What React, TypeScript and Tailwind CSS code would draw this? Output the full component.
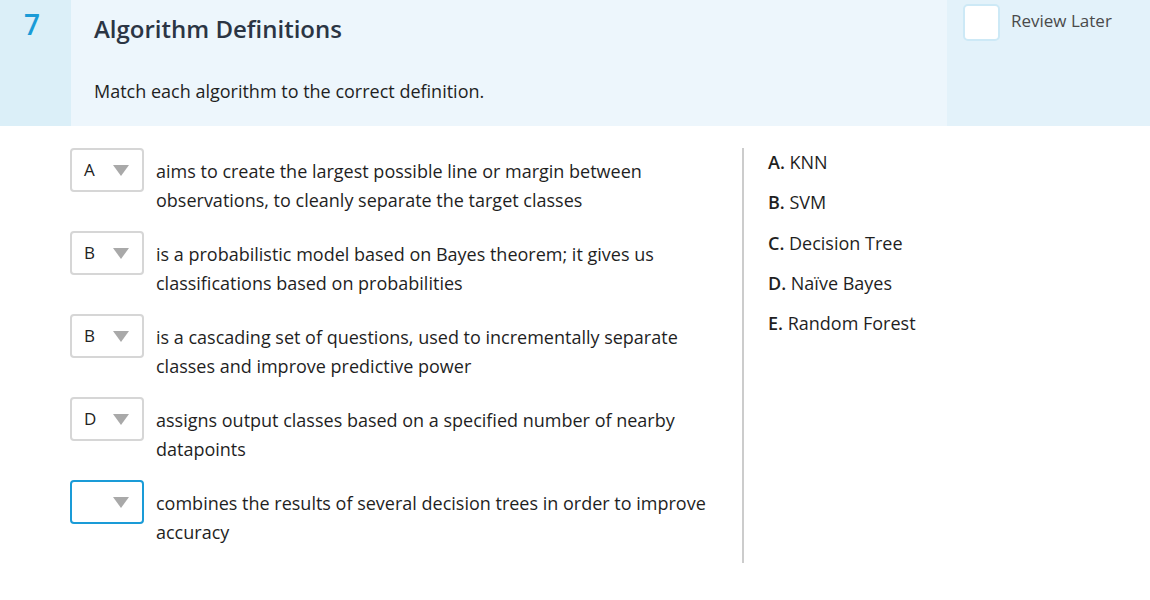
type Row = { value: string; text: string; focused?: boolean };

const rows: Row[] = [
  {
    value: "A",
    text: "aims to create the largest possible line or margin between observations, to cleanly separate the target classes",
  },
  {
    value: "B",
    text: "is a probabilistic model based on Bayes theorem; it gives us classifications based on probabilities",
  },
  {
    value: "B",
    text: "is a cascading set of questions, used to incrementally separate classes and improve predictive power",
  },
  {
    value: "D",
    text: "assigns output classes based on a specified number of nearby datapoints",
  },
  {
    value: "",
    text: "combines the results of several decision trees in order to improve accuracy",
    focused: true,
  },
];

const options = [
  { key: "A.", label: "KNN" },
  { key: "B.", label: "SVM" },
  { key: "C.", label: "Decision Tree" },
  { key: "D.", label: "Naïve Bayes" },
  { key: "E.", label: "Random Forest" },
];

function Arrow() {
  return (
    <svg width="16" height="11" viewBox="0 0 16 11" className="shrink-0">
      <polygon points="0,0 16,0 8,11" fill="#a9a9a9" />
    </svg>
  );
}

function SelectBox({ value, focused }: { value: string; focused?: boolean }) {
  return (
    <div
      className={`flex h-[44px] w-[74px] shrink-0 items-center justify-between rounded-[4px] bg-white pl-[12px] pr-[13px] ${
        focused ? "border-2 border-[#1a9bd7]" : "border-2 border-[#d6d6d6]"
      }`}
    >
      <span className="text-[17px] text-[#222]">{value}</span>
      <Arrow />
    </div>
  );
}

export default function App() {
  return (
    <div
      className="min-h-screen w-[1150px] bg-white"
      style={{ fontFamily: '"Open Sans", "Noto Sans", sans-serif' }}
    >
      {/* HEADER */}
      <div className="flex h-[126px]">
        <div className="w-[71px] shrink-0 bg-[#dbeff8] pl-[24px] pt-[5px]">
          <span className="text-[28px] font-semibold leading-[38px] text-[#1a9bd7]">
            7
          </span>
        </div>
        <div className="w-[876px] shrink-0 bg-[#edf6fc] pl-[23px] pt-[12px]">
          <h1 className="text-[24px] font-semibold leading-[34px] text-[#2b3544]">
            Algorithm Definitions
          </h1>
          <p className="mt-[32px] text-[18px] leading-[26px] text-[#1f1f1f]">
            Match each algorithm to the correct definition.
          </p>
        </div>
        <div className="flex flex-1 items-start bg-[#e3f2fa] pl-[16px] pt-[4px]">
          <div className="h-[37px] w-[37px] rounded-[5px] border-2 border-[#cde9f6] bg-white" />
          <span className="ml-[11px] mt-[5px] text-[17px] leading-[24px] text-[#4a4a4a]">
            Review Later
          </span>
        </div>
      </div>

      {/* BODY */}
      <div className="flex pt-[22px]">
        <div className="flex w-[742px] shrink-0 flex-col gap-[16px] pb-[16px] pl-[70px]">
          {rows.map((row, i) => (
            <div key={i} className="flex items-start">
              <SelectBox value={row.value} focused={row.focused} />
              <p className="ml-[12px] mt-[9px] w-[572px] shrink-0 text-[18px] leading-[29px] text-[#1f1f1f]">
                {row.text}
              </p>
            </div>
          ))}
        </div>
        <div className="w-[2px] self-stretch bg-[#cccccc]" />
        <div className="flex flex-col gap-[14.25px] pl-[24px] pt-[1px]">
          {options.map((o) => (
            <div key={o.key} className="text-[18px] leading-[26px] text-[#1f1f1f]">
              <span className="font-semibold">{o.key}</span> {o.label}
            </div>
          ))}
        </div>
      </div>
    </div>
  );
}
